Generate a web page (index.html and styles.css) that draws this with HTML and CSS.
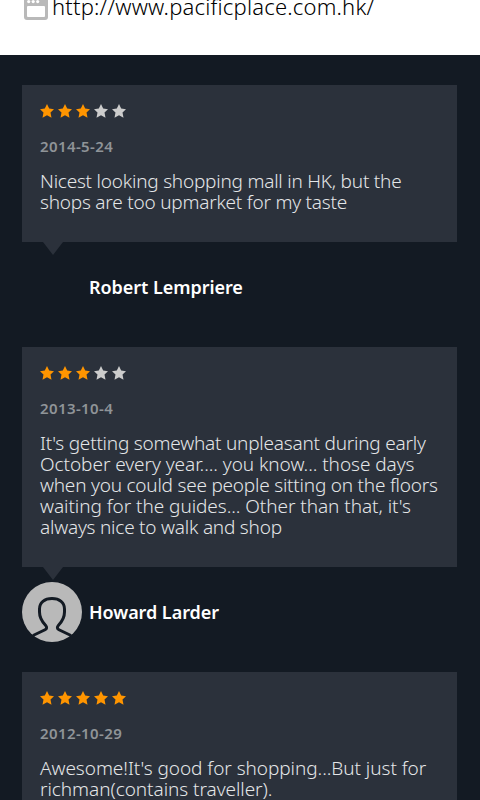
FILE: index.html
```
<!DOCTYPE html>
<html lang="en">
<head>
  <meta charset="UTF-8">
  <title>Pacific Place</title>
  <meta name="viewport" content="width=device-width, initial-scale=1.0">
  <link rel="stylesheet" href="styles.css">
</head>
<body>
  <svg class="defs">
    <symbol id="star" viewBox="0 0 14 14">
      <path d="M7 0L9.200 4.600L14 5.200L10.500 8.600L11.500 13.800L7 11.300L2.500 13.800L3.500 8.600L0 5.200L4.800 4.600Z"/>
    </symbol>
  </svg>

  <div class="website">
    <svg class="site-icon" viewBox="0 0 24 24">
      <rect width="24" height="24" rx="3" fill="#b9b9b9"/>
      <rect x="3" y="10" width="18" height="11" rx="1" fill="#fff"/>
      <circle cx="4.7" cy="5.6" r="1.6" fill="#fff"/>
      <circle cx="9.2" cy="5.6" r="1.6" fill="#fff"/>
      <circle cx="13.7" cy="5.6" r="1.6" fill="#fff"/>
    </svg>
    <span class="url">http://www.pacificplace.com.hk/</span>
  </div>

  <div class="reviews">
    <div class="review">
      <div class="bubble">
        <div class="stars">
          <svg class="on"><use href="#star"/></svg>
          <svg class="on"><use href="#star"/></svg>
          <svg class="on"><use href="#star"/></svg>
          <svg><use href="#star"/></svg>
          <svg><use href="#star"/></svg>
        </div>
        <div class="date">2014-5-24</div>
        <p class="text">Nicest looking shopping mall in HK, but the<br>shops are too upmarket for my taste</p>
      </div>
      <div class="author">
        <div class="avatar"></div>
        <span class="name">Robert Lempriere</span>
      </div>
    </div>

    <div class="review">
      <div class="bubble">
        <div class="stars">
          <svg class="on"><use href="#star"/></svg>
          <svg class="on"><use href="#star"/></svg>
          <svg class="on"><use href="#star"/></svg>
          <svg><use href="#star"/></svg>
          <svg><use href="#star"/></svg>
        </div>
        <div class="date">2013-10-4</div>
        <p class="text">It's getting somewhat unpleasant during early<br><span class="loose">October every year.... you know... those days</span><br>when you could see people sitting on the floors<br><span class="loose">waiting for the guides... Other than that, it's</span><br>always nice to walk and shop</p>
      </div>
      <div class="author">
        <svg class="avatar" viewBox="0 0 60 60">
          <circle cx="30" cy="30" r="30" fill="#b9b9b9"/>
          <path d="M11 53.500L23 47.800Q26 46 23.500 43.200Q17.500 37 17.500 30V27C17.500 20.500 22.500 16.500 30 16.500S42.500 20.500 42.500 27V30Q42.500 37 36.500 43.200Q34 46 37 47.800L49 53.500" fill="none" stroke="#131a23" stroke-width="3"/>
        </svg>
        <span class="name">Howard Larder</span>
      </div>
    </div>

    <div class="review">
      <div class="bubble">
        <div class="stars">
          <svg class="on"><use href="#star"/></svg>
          <svg class="on"><use href="#star"/></svg>
          <svg class="on"><use href="#star"/></svg>
          <svg class="on"><use href="#star"/></svg>
          <svg class="on"><use href="#star"/></svg>
        </div>
        <div class="date">2012-10-29</div>
        <p class="text loose">Awesome!It's good for shopping...But just for<br>richman(contains traveller).</p>
      </div>
    </div>
  </div>
</body>
</html>
```
FILE: styles.css
```
body {
  margin: 0;
  background-color: #131a23;
  font-family: "Noto Sans", "Open Sans", sans-serif;
}
.defs {
  display: none;
}
.website {
  display: flex;
  align-items: flex-end;
  gap: 4px;
  height: 20px;
  padding: 0 24px 35px;
  background-color: #fff;
}
.site-icon {
  flex: none;
  width: 24px;
  height: 24px;
}
.url {
  color: #000;
  font-size: 22px;
  font-weight: 300;
  letter-spacing: 0.2px;
  line-height: 28px;
  white-space: nowrap;
}
.reviews {
  height: 715px;
  padding: 30px 23px 0 22px;
  overflow: hidden;
}
.bubble {
  position: relative;
  padding: 19px 18px 29px;
  background-color: #2b313b;
}
.bubble::after {
  content: "";
  position: absolute;
  top: 100%;
  left: 21px;
  border: 10px solid transparent;
  border-top: 13px solid #2b313b;
  border-bottom: 0;
}
.stars {
  display: flex;
  gap: 4px;
  height: 14px;
}
.stars svg {
  width: 14px;
  height: 14px;
  fill: #ccc;
}
.stars .on {
  fill: #ff9500;
}
.date {
  margin: 18px 0 15px;
  color: #8f9498;
  font-size: 15px;
  font-weight: 600;
  letter-spacing: 0.4px;
  line-height: 20px;
}
.text {
  margin: 0;
  color: #e4e6e8;
  font-size: 19px;
  font-weight: 300;
  letter-spacing: -0.22px;
  line-height: 21px;
  white-space: nowrap;
}
.loose {
  letter-spacing: -0.05px;
}
.author {
  display: flex;
  align-items: center;
  gap: 7px;
  padding: 15px 0 30px;
}
.avatar {
  width: 60px;
  height: 60px;
}
.name {
  color: #fff;
  font-size: 18px;
  font-weight: 600;
  letter-spacing: -0.05px;
}
```
